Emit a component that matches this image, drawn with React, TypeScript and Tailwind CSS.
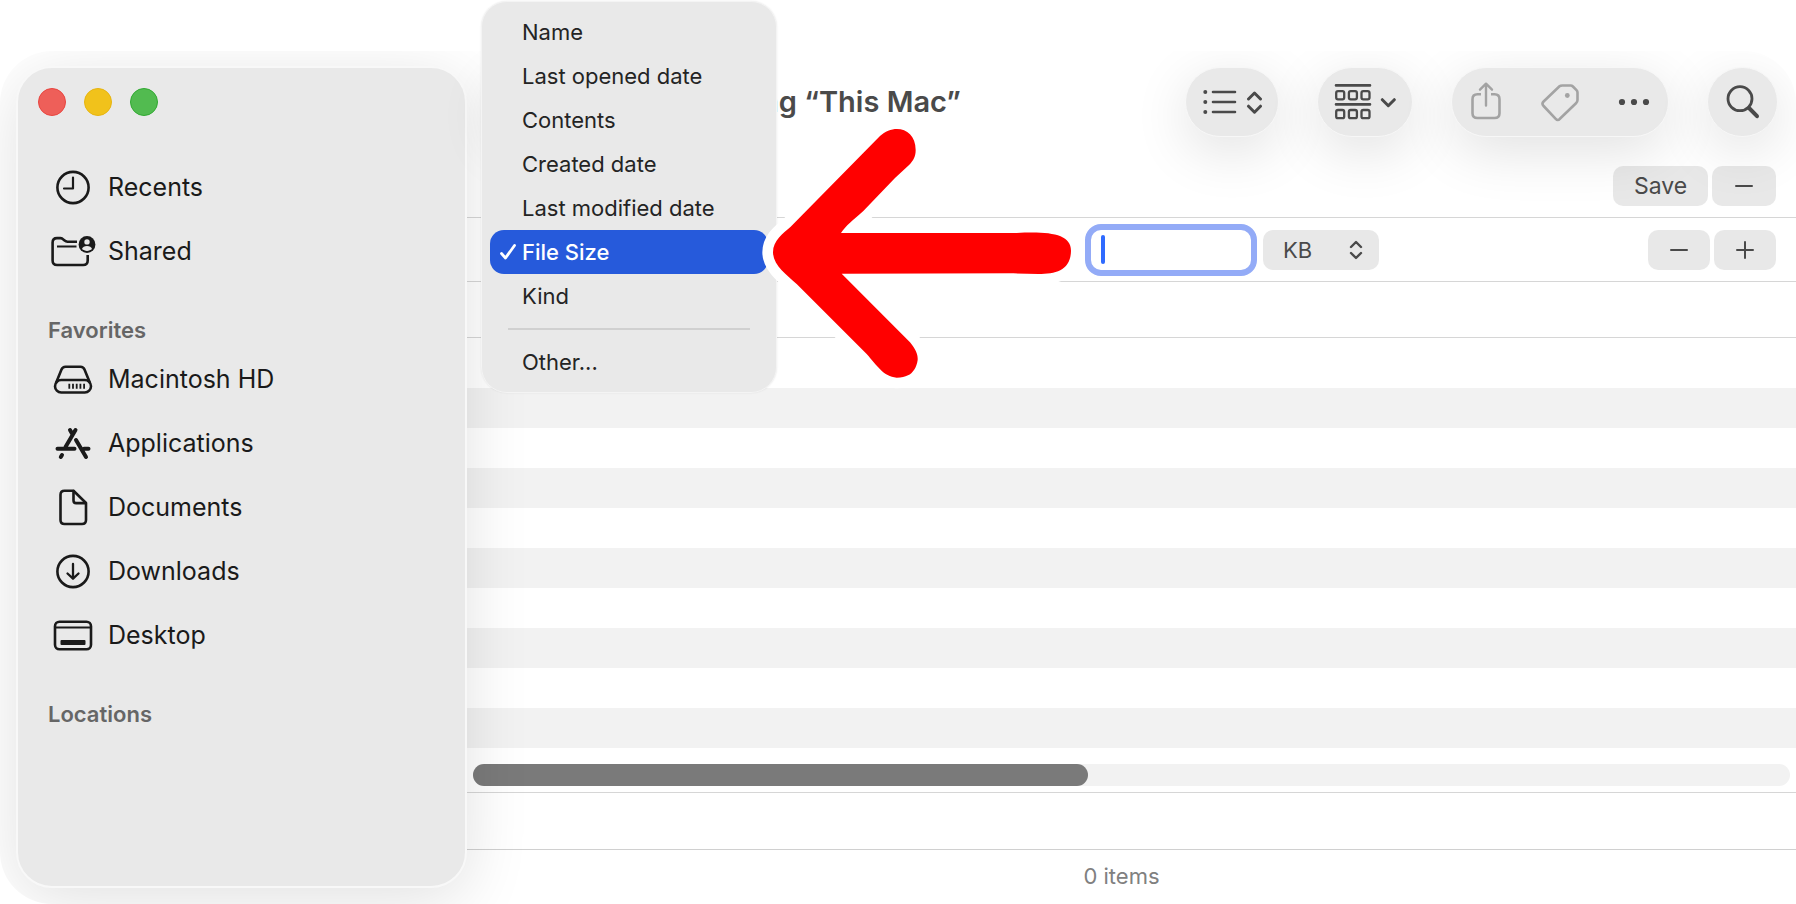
import React, { useState } from 'react';

const MENU_ITEMS = [
  'Name',
  'Last opened date',
  'Contents',
  'Created date',
  'Last modified date',
  'File Size',
  'Kind',
];

const iconProps = {
  width: 48,
  height: 40,
  viewBox: '0 0 48 40',
  fill: 'none',
  stroke: 'currentColor',
  strokeWidth: 2.6,
  strokeLinecap: 'round' as const,
  strokeLinejoin: 'round' as const,
  'aria-hidden': true,
};

function RecentsIcon() {
  return (
    <svg {...iconProps}>
      <circle cx="24" cy="19.500" r="15.6" />
      <path d="M24 9.500v11h-9" strokeWidth="2.2" />
    </svg>
  );
}

function SharedIcon() {
  return (
    <svg {...iconProps}>
      <path d="M28 9.700H18.500c-1.500 0-2.300-.6-3.300-1.400S13.500 6.100 11.500 6.100H8C5 6.100 3.600 7.700 3.600 10.500v18c0 3 1.500 4.500 4.500 4.500h26c3 0 4.600-1.500 4.600-4.500V23" strokeLinecap="butt" />
      <path d="M8 14.500h19.500" strokeWidth="2.200" strokeLinecap="butt" />
      <circle cx="38" cy="12.500" r="8.400" fill="currentColor" stroke="none" />
      <circle cx="38" cy="9.900" r="2.700" fill="#e9e9e9" stroke="none" />
      <path d="M33 17.100c.5-2.500 2.500-3.200 5-3.200s4.500.7 5 3.200c-1.300 1.200-3.100 1.800-5 1.800s-3.700-.6-5-1.800z" fill="#e9e9e9" stroke="none" />
    </svg>
  );
}

function DiskIcon() {
  return (
    <svg {...iconProps}>
      <rect x="6" y="20" width="36" height="12.500" rx="6.200" />
      <path d="M7.200 22.500 12.500 9.500c.8-2 2-2.800 4-2.800h15c2 0 3.200.8 4 2.800L40.800 22.500" />
      <path d="M20.300 23.700v5M24 23.700v5M27.700 23.700v5M31.400 23.700v5M35.100 23.700v5" strokeWidth="1.800" strokeLinecap="butt" />
    </svg>
  );
}

function ApplicationsIcon() {
  return (
    <svg {...iconProps} strokeWidth={4}>
      <path d="M26.500 6 16.500 23M21 6l2 3.500M27 16l10 17M8.500 24.700h17M35 24.700h4.500M13 31l-1.200 2" />
    </svg>
  );
}

function DocumentIcon() {
  return (
    <svg {...iconProps}>
      <path d="M15.500 2.800H24.500L37 15V32c0 2.700-1.300 4-4 4H15.500c-2.700 0-4-1.300-4-4V6.800c0-2.700 1.300-4 4-4z" />
      <path d="M24.500 3.100V12.500c0 1.800.8 2.600 2.600 2.600h9.700" />
    </svg>
  );
}

function DownloadIcon() {
  return (
    <svg {...iconProps}>
      <circle cx="24" cy="19.500" r="15.600" />
      <path d="M24 12v14M18.500 21.500l5.500 5.200 5.500-5.200" strokeWidth="2.300" />
    </svg>
  );
}

function DesktopIcon() {
  return (
    <svg {...iconProps}>
      <rect x="6" y="5.700" width="36" height="27.600" rx="4.500" />
      <path d="M6 11.500h36" strokeWidth="2" />
      <rect x="11.500" y="24" width="25" height="5" rx="1" fill="currentColor" stroke="none" />
    </svg>
  );
}

function ListIcon() {
  return (
    <svg width="62" height="24" viewBox="0 0 62 24" fill="none" stroke="currentColor" strokeLinecap="round" strokeLinejoin="round" aria-hidden>
      <path d="M12 2h22M12 12h22M12 22h22" strokeWidth="2.600" />
      <path d="M4.300 2h.01M4.300 12h.01M4.300 22h.01" strokeWidth="4" />
      <path d="M47.500 9l6-6 6 6M47.500 16.200l6 6 6-6" strokeWidth="3" />
    </svg>
  );
}

function GroupIcon() {
  const columns = [2.200, 14.900, 27.500];
  return (
    <svg width="62" height="36" viewBox="0 0 62 36" fill="none" stroke="currentColor" strokeLinecap="round" strokeLinejoin="round" aria-hidden>
      <path d="M2 1.400h34M2 20.400h34" strokeWidth="2.600" />
      {columns.map((x) => (
        <g key={x} strokeWidth="2.300">
          <rect x={x} y="7.200" width="8" height="8.200" rx="1.800" />
          <rect x={x} y="26" width="8" height="8.200" rx="1.800" />
        </g>
      ))}
      <path d="M48.300 15.700l6 6 6-6" strokeWidth="3" />
    </svg>
  );
}

function ShareIcon() {
  return (
    <svg width="40" height="40" viewBox="0 0 40 40" fill="none" stroke="currentColor" strokeWidth="2.600" strokeLinecap="round" strokeLinejoin="round" aria-hidden>
      <path d="M15 12.200h-3.500c-3.200 0-5 1.700-5 5v14c0 3.300 1.800 4.800 5 4.800h17c3.200 0 5-1.500 5-4.800v-14c0-3.300-1.800-5-5-5H25" strokeLinecap="butt" />
      <path d="M20 23.500V2M14 7.700 20 1.700l6 6" strokeWidth="2.400" />
    </svg>
  );
}

function TagIcon() {
  return (
    <svg width="40" height="40" viewBox="0 0 40 40" fill="none" stroke="currentColor" strokeWidth="2.600" strokeLinejoin="round" aria-hidden>
      <path d="M19.500 4.300 3.600 19.500c-1.500 1.500-1.500 3 0 4.500L15.700 36.800c1.400 1.500 2.800 1.500 4.200 0L36 21.300c1-1 1.500-1.900 1.500-3.300V10.500c0-1-.3-1.600-1-2.300l-3.600-3.700c-.7-.7-1.300-1-2.300-1h-8.300c-1.200 0-2 .1-2.800.8z" />
      <circle cx="27.300" cy="13.500" r="2.400" fill="currentColor" stroke="none" />
    </svg>
  );
}

function MoreIcon() {
  return (
    <svg width="40" height="40" viewBox="0 0 40 40" fill="currentColor" aria-hidden>
      <circle cx="8" cy="20" r="3.100" />
      <circle cx="20" cy="20" r="3.100" />
      <circle cx="32" cy="20" r="3.100" />
    </svg>
  );
}

function SearchIcon() {
  return (
    <svg width="40" height="40" viewBox="0 0 40 40" fill="none" stroke="currentColor" strokeLinecap="round" aria-hidden>
      <circle cx="17" cy="16.700" r="12" strokeWidth="2.800" />
      <path d="M26 26l8 8.200" strokeWidth="4" />
    </svg>
  );
}

function ArrowMark() {
  return (
    <svg className="pointer-events-none absolute left-[750px] top-[110px] z-40" width="340" height="290" viewBox="0 0 1020 870" aria-hidden>
      <path
        d="M390 78C430 40 497 52 497 120C497 140 490 152 478 164L435 204L340 303C310 330 286 348 273 369L800 369C900 364 963 372 963 422C962 480 920 492 865 492L790 490L275 491L480 697C498 720 504 733 503 750C500 773 488 790 474 796C464 800 456 803 440 803C400 800 380 765 350 732L140 522C110 495 69 465 69 427C69 390 100 370 122 350Z"
        fill="#ff0000"
        stroke="#ffffff"
        strokeWidth="64"
        strokeLinejoin="round"
        paintOrder="stroke"
      />
    </svg>
  );
}

const PINNED = [
  { label: 'Recents', Icon: RecentsIcon },
  { label: 'Shared', Icon: SharedIcon },
];

const FAVORITES = [
  { label: 'Macintosh HD', Icon: DiskIcon },
  { label: 'Applications', Icon: ApplicationsIcon },
  { label: 'Documents', Icon: DocumentIcon },
  { label: 'Downloads', Icon: DownloadIcon },
  { label: 'Desktop', Icon: DesktopIcon },
];

function SidebarList({ items }: { items: typeof PINNED }) {
  return (
    <ul>
      {items.map(({ label, Icon }) => (
        <li key={label}>
          <a href="#" className="flex h-16 items-center gap-[11px] pl-[31px] text-[25px] text-[#1a1a1a]">
            <Icon />
            {label}
          </a>
        </li>
      ))}
    </ul>
  );
}

function Sidebar() {
  return (
    <aside className="relative z-10 mb-4 ml-4 mt-[15px] w-[451px] shrink-0 rounded-[36px] border-2 border-[#f8f8f8] bg-[#e9e9e9] shadow-[0_12px_64px_rgba(0,0,0,0.12)]">
      <div className="flex gap-[18px] pl-5 pt-5">
        <button aria-label="Close" className="size-7 rounded-full border border-[#e8453f] bg-[#ee5f59]" />
        <button aria-label="Minimize" className="size-7 rounded-full border border-[#e6b410] bg-[#f1c21b]" />
        <button aria-label="Zoom" className="size-7 rounded-full border border-[#31a932] bg-[#52bb50]" />
      </div>
      <nav className="mt-10">
        <SidebarList items={PINNED} />
        <h2 className="flex h-16 items-end pb-px pl-[30px] text-[22px] font-semibold text-[#666666]">Favorites</h2>
        <SidebarList items={FAVORITES} />
        <h2 className="flex h-16 items-end pb-px pl-[30px] text-[22px] font-semibold text-[#666666]">Locations</h2>
      </nav>
    </aside>
  );
}

const pill =
  'relative z-20 flex h-[70px] shrink-0 items-center justify-center rounded-full border border-[#f7f7f7] bg-[#e9e9e9] text-[#4a4a4a] shadow-[0_14px_56px_rgba(0,0,0,0.12)]';

function Toolbar() {
  return (
    <header className="flex h-[103px] items-start gap-[38px] pr-[18px] pt-4">
      <div className="flex flex-1 items-center gap-[34px] pl-6">
        <div className={`${pill} w-[130px]`} />
        <h1 className="text-[29px] font-semibold text-[#4a4a4a]">Searching “This Mac”</h1>
      </div>
      <button aria-label="View" className={`${pill} w-[94px]`}>
        <ListIcon />
      </button>
      <button aria-label="Group" className={`${pill} w-24`}>
        <GroupIcon />
      </button>
      <div className={`${pill} w-[218px] gap-[34px]`}>
        <button aria-label="Share" className="text-[#a3a3a3]">
          <ShareIcon />
        </button>
        <button aria-label="Tags" className="text-[#a3a3a3]">
          <TagIcon />
        </button>
        <button aria-label="More">
          <MoreIcon />
        </button>
      </div>
      <button aria-label="Search" className={`${pill} w-[71px]`}>
        <SearchIcon />
      </button>
    </header>
  );
}

function Sign({ plus }: { plus?: boolean }) {
  return (
    <svg width="20" height="20" viewBox="0 0 20 20" stroke="currentColor" strokeWidth="2" strokeLinecap="round" aria-hidden>
      <path d={plus ? 'M2 10h16M10 2v16' : 'M2 10h16'} />
    </svg>
  );
}

const chip = 'relative flex h-10 items-center justify-center rounded-[10px] bg-black/9 text-[23px] text-[#4a4a4a]';

function CriteriaRow() {
  const [size, setSize] = useState('');
  const [unit, setUnit] = useState('KB');

  return (
    <div className="flex h-16 items-start border-b border-[#d6d6d6] pr-5 pt-3">
      <div className="flex flex-1 gap-3 pl-[624px]">
        <div className="relative">
          <input
            type="text"
            aria-label="File size"
            value={size}
            onChange={(e) => setSize(e.target.value)}
            className="h-10 w-[160px] rounded-[10px] bg-white px-3 text-[22px] caret-transparent outline-6 outline-[#93abf7]"
          />
          {size === '' && <span className="absolute left-[10px] top-[5px] h-[29px] w-1 rounded-sm bg-[#2f6bff]" />}
        </div>
        <div className="relative">
          <select
            aria-label="Unit"
            value={unit}
            onChange={(e) => setUnit(e.target.value)}
            className="h-10 w-[116px] appearance-none rounded-[10px] bg-[#e8e8e8] pl-5 text-[22px] text-[#4a4a4a]"
          >
            <option>KB</option>
            <option>MB</option>
            <option>GB</option>
          </select>
          <svg className="pointer-events-none absolute right-4 top-[10px]" width="14" height="20" viewBox="0 0 14 20" fill="none" stroke="#4a4a4a" strokeWidth="2.400" strokeLinecap="round" strokeLinejoin="round" aria-hidden>
            <path d="M2 7l5-5 5 5M2 13l5 5 5-5" />
          </svg>
        </div>
      </div>
      <div className="flex gap-1">
        <button aria-label="Remove criterion" className={`${chip} w-[62px]`}>
          <Sign />
        </button>
        <button aria-label="Add criterion" className={`${chip} w-[62px]`}>
          <Sign plus />
        </button>
      </div>
    </div>
  );
}

function AttributeMenu() {
  const [selected, setSelected] = useState('File Size');

  return (
    <div role="menu" className="absolute left-[481px] top-px z-30 w-[296px] rounded-[26px] border border-[#f4f4f4] bg-[#e9e9e9] px-2 py-2 text-[22px] text-[#242424] shadow-[0_0_2px_rgba(0,0,0,0.08)]">
      {MENU_ITEMS.map((item) => (
        <button
          key={item}
          role="menuitemradio"
          aria-checked={item === selected}
          onClick={() => setSelected(item)}
          className={
            item === selected
              ? 'flex h-11 w-full items-center rounded-[14px] bg-[#265adb] font-medium text-white'
              : 'flex h-11 w-full items-center'
          }
        >
          <span className="flex w-8 justify-center pl-1">
            {item === selected && (
              <svg width="18" height="18" viewBox="0 0 18 18" fill="none" stroke="currentColor" strokeWidth="2.800" strokeLinecap="round" strokeLinejoin="round" aria-hidden>
                <path d="M2.500 10.500 6.500 15 15.500 2.500" />
              </svg>
            )}
          </span>
          {item}
        </button>
      ))}
      <hr className="mx-[18px] my-[10px] h-0.5 border-0 bg-[#d0d0d0]" />
      <button role="menuitem" className="flex h-11 w-full items-center pl-8">
        Other...
      </button>
    </div>
  );
}

export default function App() {
  return (
    <div className="relative min-h-screen bg-white pt-[51px] font-['Inter',sans-serif]">
      <div className="flex min-h-[853px] overflow-hidden rounded-[52px] bg-white">
        <Sidebar />
        <main className="min-w-0 flex-1">
          <Toolbar />
          <div className="flex h-16 items-start justify-end gap-1 border-b border-[#d6d6d6] pr-5 pt-3">
            <button className={`${chip} w-[95px]`}>Save</button>
            <button aria-label="Remove search" className={`${chip} w-16`}>
              <Sign />
            </button>
          </div>
          <CriteriaRow />
          <div className="h-14 border-b border-[#d6d6d6]" />
          <div className="pt-[50px]">
            {Array.from({ length: 9 }, (_, i) => (
              <div key={i} className="h-10 odd:bg-[#f2f2f2]" />
            ))}
          </div>
          <div className="border-b border-[#d6d6d6] px-1.5 pb-1.5 pt-4">
            <div className="h-[22px] rounded-full bg-[#f2f2f2]">
              <div className="h-full w-7/15 rounded-full bg-[#7a7a7a]" />
            </div>
          </div>
          <div className="h-[57px] border-b border-[#d0d0d0]" />
          <footer className="flex h-[53px] items-center justify-center pr-5 text-[22px] text-[#808080]">0 items</footer>
        </main>
      </div>
      <AttributeMenu />
      <ArrowMark />
    </div>
  );
}
